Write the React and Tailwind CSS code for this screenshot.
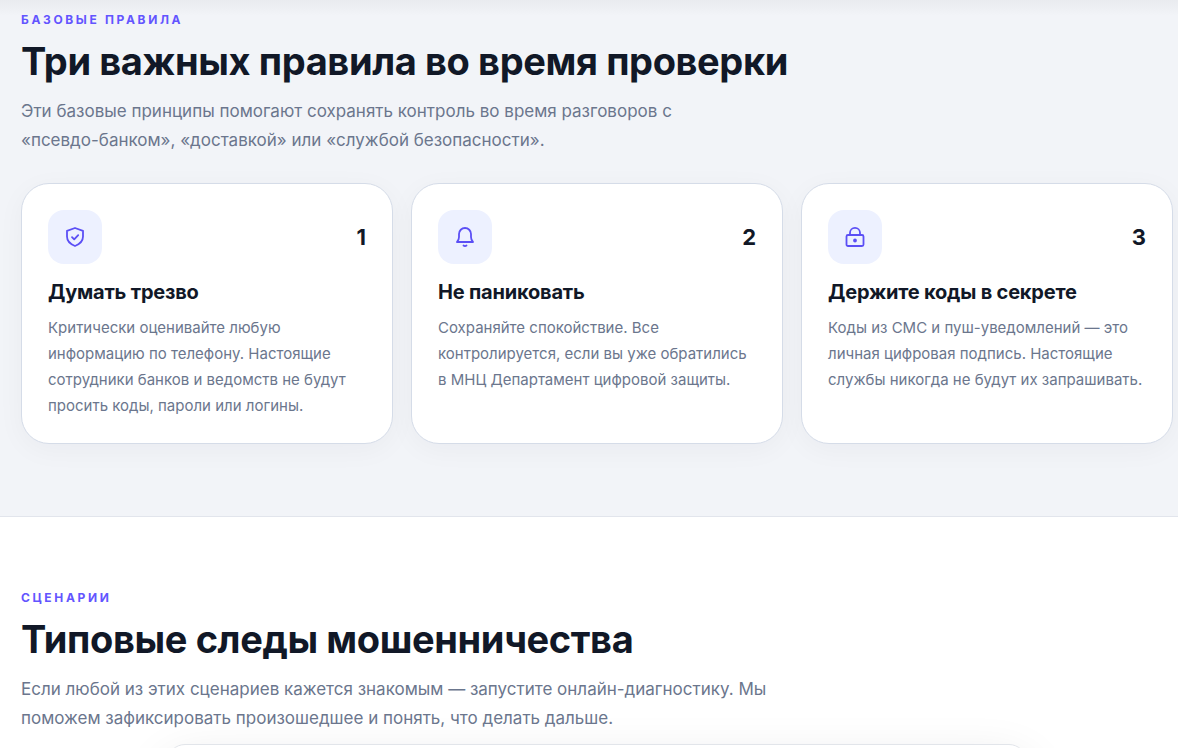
const rules = [
  {
    number: 1,
    icon: ShieldIcon,
    title: 'Думать трезво',
    text: 'Критически оценивайте любую информацию по телефону. Настоящие сотрудники банков и ведомств не будут просить коды, пароли или логины.',
  },
  {
    number: 2,
    icon: BellIcon,
    title: 'Не паниковать',
    text: 'Сохраняйте спокойствие. Все контролируется, если вы уже обратились в МНЦ Департамент цифровой защиты.',
  },
  {
    number: 3,
    icon: LockIcon,
    title: 'Держите коды в секрете',
    text: 'Коды из СМС и пуш-уведомлений — это личная цифровая подпись. Настоящие службы никогда не будут их запрашивать.',
  },
]

function Icon({ children }) {
  return (
    <svg
      className="size-6"
      viewBox="0 0 24 24"
      fill="none"
      stroke="currentColor"
      strokeWidth="1.8"
      strokeLinecap="round"
      strokeLinejoin="round"
      aria-hidden="true"
    >
      {children}
    </svg>
  )
}

function ShieldIcon() {
  return (
    <Icon>
      <path d="M12 3 4 5.800v5.800c0 4.400 3.300 7.600 8 9.400 4.700-1.800 8-5 8-9.400V5.800L12 3Z" />
      <path d="m9 12.200 2.200 2.200 4-4.200" />
    </Icon>
  )
}

function BellIcon() {
  return (
    <Icon>
      <path d="M4 17h16c-1.400-1.400-2-3-2-5V9A6 6 0 0 0 6 9v3c0 2-.6 3.600-2 5Z" />
      <path d="M10.500 20.500c.9.700 2.100.7 3 0" />
    </Icon>
  )
}

function LockIcon() {
  return (
    <Icon>
      <rect x="3.500" y="10" width="17" height="11" rx="1.500" />
      <path d="M7 10V7.800a5 5 0 0 1 10 0V10" />
      <circle cx="12" cy="15.500" r="1" fill="currentColor" />
    </Icon>
  )
}

function SectionHeading({ eyebrow, title, children }) {
  return (
    <header>
      <p className="text-xs leading-[18px] font-bold tracking-[0.22em] uppercase text-[#6355ff]">{eyebrow}</p>
      <h2 className="mt-[10px] text-[38px] leading-[44px] font-bold tracking-[-0.01em] text-[#111827]">{title}</h2>
      <p className="mt-[14px] max-w-[760px] text-[17px] leading-[29px] text-[#6b768d]">{children}</p>
    </header>
  )
}

function RuleCard({ rule }) {
  return (
    <article className="rounded-[28px] border border-[#d5dce8] bg-white px-[26px] pt-[26px] pb-6 shadow-[0_6px_28px_rgba(15,23,42,0.04)]">
      <div className="flex items-center justify-between">
        <div className="flex size-[54px] items-center justify-center rounded-2xl bg-[#edf1ff] text-[#5b4ff5]">
          <rule.icon />
        </div>
        <span className="text-[22px] leading-[26px] font-bold text-[#111827]">{rule.number}</span>
      </div>
      <h3 className="mt-[15px] text-xl leading-[26px] font-bold tracking-[-0.01em] text-[#111827]">{rule.title}</h3>
      <p className="mt-[10px] text-[15px] leading-[26px] text-[#6b768d]">{rule.text}</p>
    </article>
  )
}

export default function App() {
  return (
    <main className="h-screen overflow-hidden bg-white font-['Inter',sans-serif]">
      <section className="relative border-b border-[#e2e5ec] bg-[#f2f4f8] pt-[11px] pr-[5px] pb-[72px] pl-[21px]">
        <div className="absolute inset-x-0 top-0 h-4 bg-linear-to-b from-[#e9ebef] to-[#f2f4f8]" />
        <div className="relative mx-auto max-w-[1152px]">
          <SectionHeading eyebrow="Базовые правила" title="Три важных правила во время проверки">
            Эти базовые принципы помогают сохранять контроль во время разговоров с{' '}
            <span className="whitespace-nowrap">«псевдо-банком»</span>, «доставкой» или «службой безопасности».
          </SectionHeading>
          <div className="mt-7 grid grid-cols-3 gap-[18px]">
            {rules.map((rule) => (
              <RuleCard key={rule.number} rule={rule} />
            ))}
          </div>
        </div>
      </section>

      <section className="pt-[72px] pr-[5px] pl-[21px]">
        <div className="mx-auto max-w-[1152px]">
          <SectionHeading eyebrow="Сценарии" title="Типовые следы мошенничества">
            Если любой из этих сценариев кажется знакомым — запустите онлайн-диагностику. Мы поможем зафиксировать
            произошедшее и понять, что делать дальше.
          </SectionHeading>
          <div className="mx-auto mt-[11px] h-24 max-w-[860px] rounded-[18px] border border-[#e2e5ea] bg-white shadow-[0_18px_50px_rgba(15,23,42,0.12)]" />
        </div>
      </section>
    </main>
  )
}
